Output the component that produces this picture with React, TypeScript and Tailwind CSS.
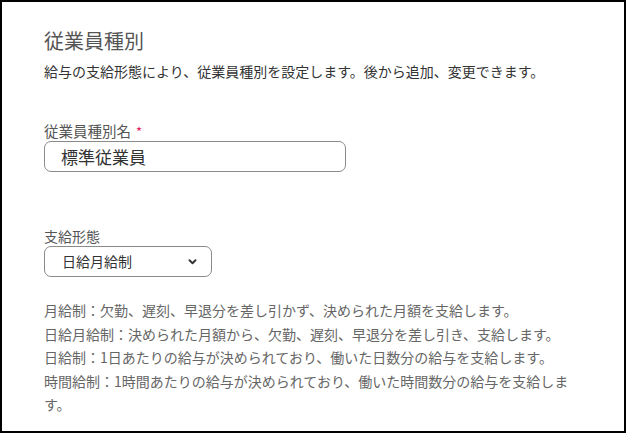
import React, { useState } from 'react';

const font = { fontFamily: '"Noto Sans CJK JP", "Noto Sans", sans-serif' };

const NOTES = [
  '月給制：欠勤、遅刻、早退分を差し引かず、決められた月額を支給します。',
  '日給月給制：決められた月額から、欠勤、遅刻、早退分を差し引き、支給します。',
  '日給制：1日あたりの給与が決められており、働いた日数分の給与を支給します。',
  '時間給制：1時間あたりの給与が決められており、働いた時間数分の給与を支給します。',
];

const Chevron = () => (
  <svg width="9" height="6" viewBox="0 0 10 7" className="text-[#333]">
    <path d="M1.5 1.5 L5 5 L8.5 1.5" fill="none" stroke="currentColor" strokeWidth="2.2" strokeLinecap="round" strokeLinejoin="round" />
  </svg>
);

const App: React.FC = () => {
  const [name, setName] = useState('標準従業員');
  const [payType] = useState('日給月給制');

  return (
    <div className="w-[626px] h-[433px] bg-white border-2 border-black overflow-hidden" style={font}>
      <div className="pl-[42px] pt-[25px]">
        {/* Header */}
        <h2 className="text-[20px] leading-[28px] text-[#555]">従業員種別</h2>
        <p className="mt-[6px] text-[14px] leading-[20px] text-[#333]">
          給与の支給形態により、従業員種別を設定します。後から追加、変更できます。
        </p>

        {/* Name */}
        <label className="flex items-center mt-[40px] text-[14.5px] leading-[20px] text-[#555]">
          従業員種別名
          <span className="ml-[5px] mt-[2px] text-[#e0245e] text-[13px] leading-[10px]">*</span>
        </label>
        <input
          className="block w-[302px] h-[31px] border border-[#8a8a8a] rounded-[7px] pl-[16px] text-[17px] text-[#333] outline-none"
          value={name}
          onChange={e => setName(e.target.value)}
          style={font}
        />

        {/* Pay type */}
        <label className="block mt-[55px] text-[14px] leading-[19px] text-[#555]">支給形態</label>
        <button className="flex items-center justify-between w-[168px] h-[31px] border border-[#8a8a8a] rounded-[7px] pl-[17px] pr-[14px] text-[14px] text-[#333]">
          <span>{payType}</span>
          <Chevron />
        </button>

        {/* Notes */}
        <div className="mt-[22px] w-[534px] text-[14px] leading-[23.5px] text-[#666]">
          {NOTES.map(n => (
            <p key={n}>{n}</p>
          ))}
        </div>
      </div>
    </div>
  );
};

export default App;
